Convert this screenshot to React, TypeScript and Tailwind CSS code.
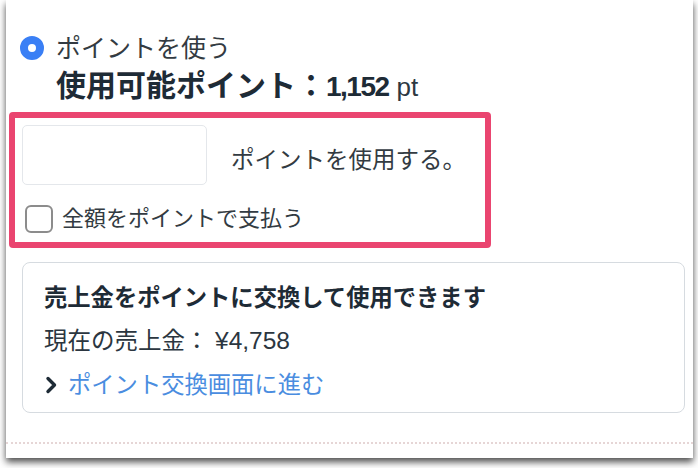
import { useState } from 'react'

const FONT = { fontFamily: '"Liberation Sans", "Noto Sans CJK JP", sans-serif' }

export default function App() {
  const [points, setPoints] = useState('')
  const [payAll, setPayAll] = useState(false)

  return (
    <div className="w-[698px] h-[468px] bg-white overflow-hidden" style={FONT}>
      <div className="ml-[6px] w-[687px] h-[458px] bg-white shadow-[0_4px_7px_rgba(0,0,0,0.7)] pt-[33px]">
        {/* ポイントを使う */}
        <label className="flex items-center h-[30px] pl-[14px] gap-[12px] cursor-pointer">
          <span className="shrink-0 w-[24px] h-[24px] rounded-full border-[8px] border-[#3a7ff5] bg-white" />
          <span className="text-[25px] leading-[30px] text-[#333b42]">ポイントを使う</span>
        </label>

        <div className="mt-[3px] pl-[50px] h-[36px] flex items-baseline text-[#1e2b36]">
          <span className="text-[30px] leading-[36px] font-bold">使用可能ポイント：</span>
          <span className="text-[28px] font-bold tracking-[-1.5px]">1,152</span>
          <span className="text-[26px] ml-[8px] text-[#2d3842]">pt</span>
        </div>

        {/* 入力エリア */}
        <div className="mt-[10px] ml-[3px] w-[482px] h-[136px] border-[6px] border-[#ea4570] rounded-[4px] pl-[7px] pt-[7px]">
          <div className="flex items-center">
            <input
              value={points}
              onChange={e => setPoints(e.target.value)}
              className="w-[185px] h-[60px] border-[1.5px] border-[#e4e7eb] rounded-[5px] outline-none px-3 text-[22px]"
            />
            <span className="ml-[24px] mt-[9px] text-[23.5px] leading-[30px] text-[#333b42]">ポイントを使用する。</span>
          </div>
          <label className="mt-[20px] ml-[3px] flex items-center gap-[9px] cursor-pointer">
            <input
              type="checkbox"
              checked={payAll}
              onChange={e => setPayAll(e.target.checked)}
              className="appearance-none w-[28px] h-[28px] border-[2.5px] border-[#8c8c8c] rounded-[6px] bg-white"
            />
            <span className="text-[22px] leading-[28px] text-[#333b42]">全額をポイントで支払う</span>
          </label>
        </div>

        {/* 売上金 */}
        <div className="mt-[14px] ml-[16px] w-[663px] h-[151px] border-[1.5px] border-[#d6dbe0] rounded-[8px] pl-[21px] pt-[19px]">
          <p className="text-[23.3px] leading-[32px] font-bold text-[#1e2b36]">売上金をポイントに交換して使用できます</p>
          <p className="mt-[11px] text-[23.5px] leading-[32px] text-[#2b3640]">
            現在の売上金： <span className="text-[24.5px]">¥4,758</span>
          </p>
          <a href="#" className="mt-[12px] flex items-center h-[32px]">
            <svg width="13" height="18" viewBox="0 0 13 18" className="ml-[1px] mr-[10px]">
              <path d="M3 2.5 L9.5 9 L3 15.5" fill="none" stroke="#1e2b36" strokeWidth="3.4" strokeLinecap="round" strokeLinejoin="round" />
            </svg>
            <span className="text-[23.3px] leading-[32px] text-[#4a8de0]">ポイント交換画面に進む</span>
          </a>
        </div>

        <div className="mt-[29px] border-t-[2px] border-dotted border-[#e6d6d6]" />
      </div>
    </div>
  )
}
